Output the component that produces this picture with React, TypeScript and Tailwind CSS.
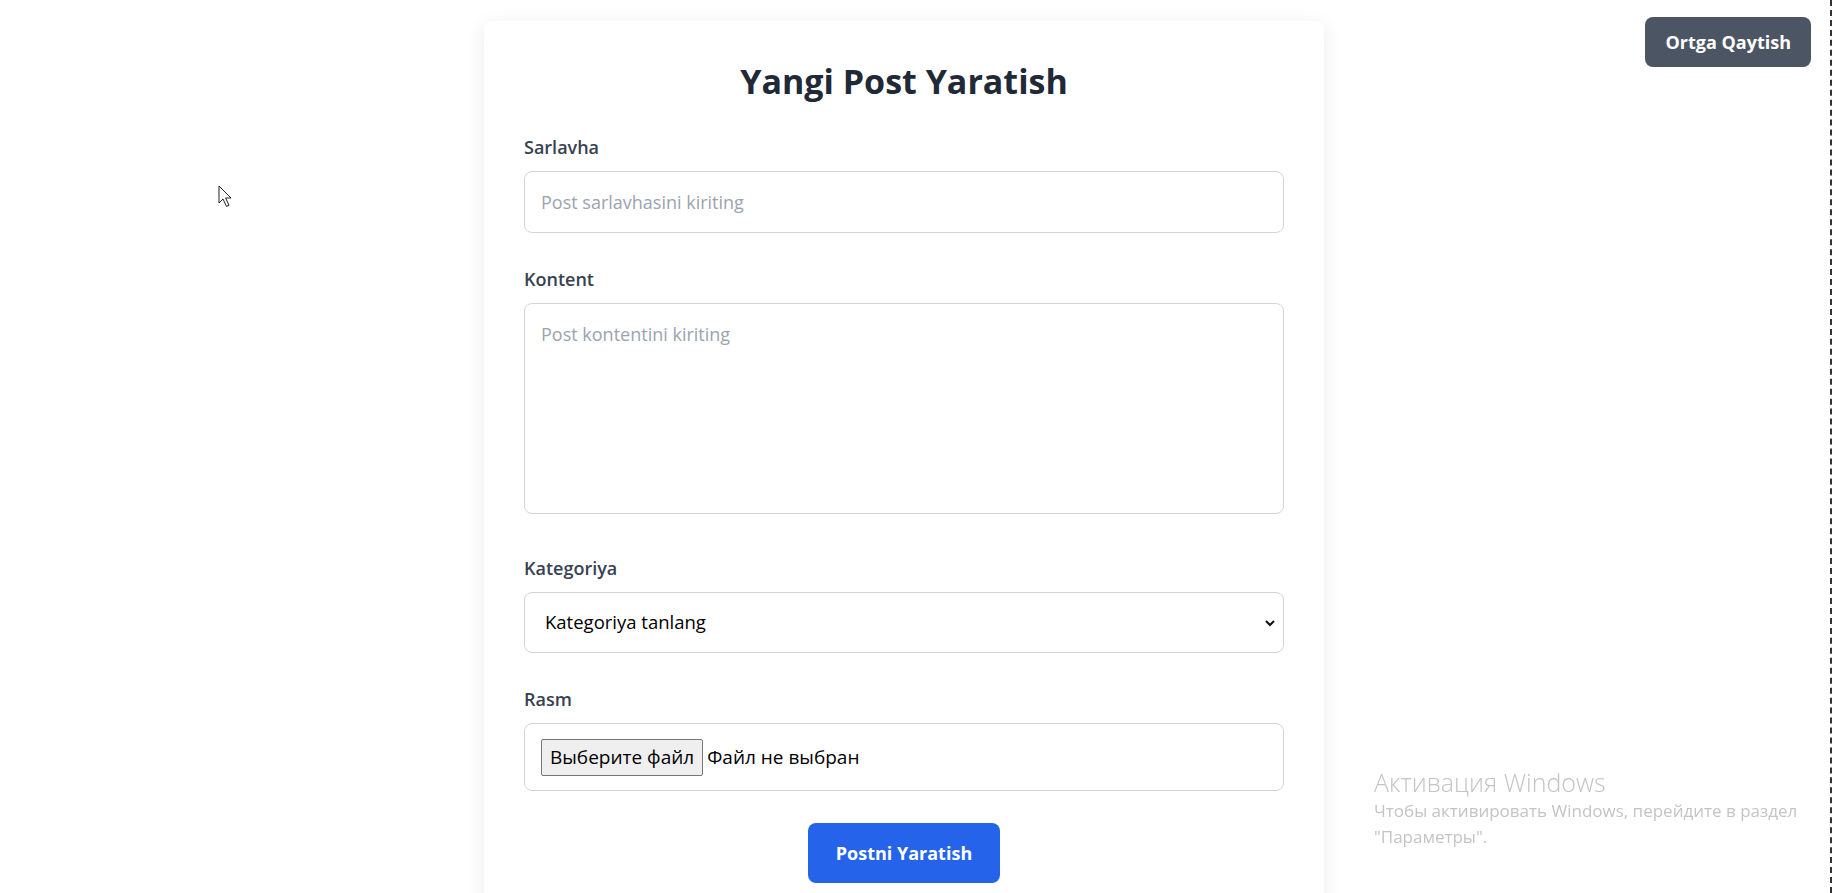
import React from "react";

const labelCls = "block text-lg font-semibold text-[#374151] mb-2.5";
const fieldCls =
  "block w-full rounded-lg border border-[#d1d5db] bg-white px-4 text-lg text-black placeholder:text-[#9ca3af] outline-none";

const Cursor = () => (
  <svg width="16" height="24" viewBox="0 0 16 24" className="absolute left-[218px] top-[185px]">
    <path
      d="M1 1 L1 18 L5 14 L8.5 21.5 L11 20.3 L7.6 13 L13 13 Z"
      fill="white"
      stroke="#222"
      strokeWidth="1"
      strokeLinejoin="round"
    />
  </svg>
);

export default function App() {
  return (
    <div className="relative min-h-[893px] w-full bg-white font-['Open_Sans',sans-serif]">
      <Cursor />

      <button className="fixed top-[17px] right-8 rounded-lg bg-[#4b5563] px-5 py-[11px] text-lg font-bold text-white">
        Ortga Qaytish
      </button>

      <div className="fixed top-0 bottom-0 left-[1830px] border-l-2 border-dashed border-[#333]" />

      <div className="pointer-events-none fixed left-[1374px] top-[766px] text-[#c4c4c4]">
        <p className="text-[25px] leading-[32px] font-light">Активация Windows</p>
        <p className="text-[17px] leading-[26px]">
          Чтобы активировать Windows, перейдите в раздел
          <br />
          "Параметры".
        </p>
      </div>

      <div className="flex w-[1808px] justify-center pt-[21px]">
        <div className="w-[840px] rounded-lg bg-white p-10 shadow-[0_4px_20px_rgba(0,0,0,0.08)]">
          <h1 className="mb-8 text-center text-[34px] leading-10 font-bold text-[#1f2937]">
            Yangi Post Yaratish
          </h1>

          <form className="flex flex-col">
            <div className="mb-8">
              <label className={labelCls}>Sarlavha</label>
              <input
                type="text"
                placeholder="Post sarlavhasini kiriting"
                className={`${fieldCls} h-[62px]`}
              />
            </div>

            <div className="mb-10">
              <label className={labelCls}>Kontent</label>
              <textarea
                placeholder="Post kontentini kiriting"
                className={`${fieldCls} h-[211px] resize-none py-4`}
              />
            </div>

            <div className="mb-8">
              <label className={labelCls}>Kategoriya</label>
              <div className="relative">
                <select className={`${fieldCls} h-[61px] appearance-none pl-[20px] text-[18.5px]`}>
                  <option>Kategoriya tanlang</option>
                </select>
                <svg
                  width="12"
                  height="12"
                  viewBox="0 0 12 12"
                  className="pointer-events-none absolute right-[8px] top-[25px]"
                >
                  <path d="M2 4 L6 8 L10 4" fill="none" stroke="#111" strokeWidth="2" />
                </svg>
              </div>
            </div>

            <div className="mb-8">
              <label className={labelCls}>Rasm</label>
              <div className="flex h-[68px] w-full items-center rounded-lg border border-[#d1d5db] px-4">
                <span className="rounded-[2px] border border-[#767676] bg-[#efefef] px-[8px] py-[3px] text-[19px] leading-[29px] text-black">
                  Выберите файл
                </span>
                <span className="ml-1 text-[19px] text-black">Файл не выбран</span>
              </div>
            </div>

            <div className="flex justify-center">
              <button
                type="button"
                className="rounded-lg bg-[#2563eb] px-[28px] py-4 text-lg leading-7 font-bold text-white"
              >
                Postni Yaratish
              </button>
            </div>
          </form>
        </div>
      </div>
    </div>
  );
}
